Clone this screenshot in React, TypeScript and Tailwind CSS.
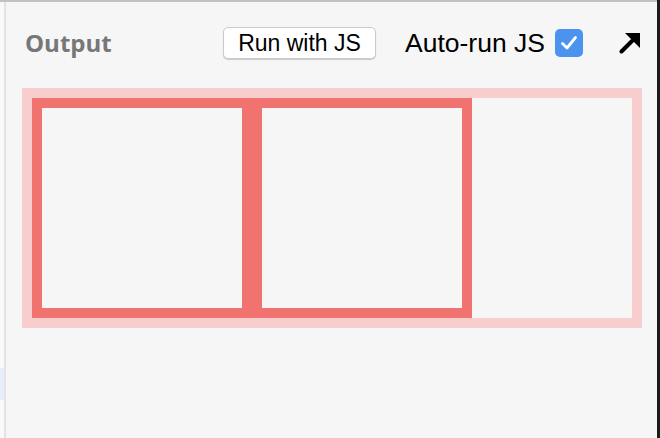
export default function App() {
  return (
    <div className="flex h-[438px] w-[660px] overflow-hidden bg-[#f6f6f6]">
      <div className="flex flex-1 flex-col">
        <div className="h-[2px] bg-[#c2c2c2]" />
        <div className="flex flex-1">
          {/* Left gutter */}
          <div className="flex w-[4px] flex-col bg-[#fafafa]">
            <div className="h-[366px]" />
            <div className="h-[32px] bg-[#e7eefa]" />
          </div>
          <div className="w-[2px] bg-[#e3e3e3]" />

          {/* Output pane */}
          <div className="flex flex-1 flex-col">
            {/* Header */}
            <div className="flex h-[82px] items-center font-['Liberation_Sans',Arial,sans-serif]">
              <h2 className="ml-[19px] w-[198px] font-['Open_Sans',sans-serif] text-[24px] font-bold text-[#777777]">
                Output
              </h2>
              <button className="flex h-[32px] w-[153px] items-center justify-center rounded-[5px] border border-[#cbcbcb] bg-white text-[23px] leading-none text-black shadow-[0_1px_1px_rgba(0,0,0,0.18)]">
                Run with JS
              </button>
              <span className="ml-[29px] text-[26.5px] leading-none text-black">Auto-run JS</span>
              <span className="ml-[10px] flex h-[28px] w-[28px] items-center justify-center rounded-[5px] bg-[#4c93f0]">
                <svg width="28" height="28" viewBox="0 0 28 28" fill="none">
                  <path
                    d="M7.5 14.5 L12 19 L20.5 8.5"
                    stroke="white"
                    strokeWidth="2.8"
                    strokeLinecap="round"
                    strokeLinejoin="round"
                  />
                </svg>
              </span>
              <svg className="ml-[36px]" width="22" height="22" viewBox="0 0 22 22">
                <line x1="2.5" y1="19.5" x2="13" y2="9" stroke="black" strokeWidth="4" strokeLinecap="round" />
                <polygon points="6,1 21,1 21,16" fill="black" />
              </svg>
            </div>

            {/* Result */}
            <div className="ml-4 mt-1 flex h-[240px] w-[620px] border-[10px] border-[#f8cdcd]">
              <div className="h-[220px] w-[220px] border-[10px] border-[#f0736f]" />
              <div className="h-[220px] w-[220px] border-[10px] border-[#f0736f]" />
            </div>
          </div>
        </div>
      </div>
      <div className="w-[3px] bg-[#1c1c1c]" />
    </div>
  );
}
